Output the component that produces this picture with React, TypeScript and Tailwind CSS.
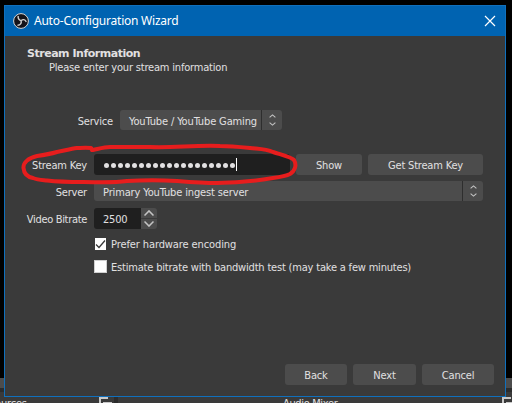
import React from 'react';

const body = "font-['DejaVu_Sans_Condensed','DejaVu_Sans',sans-serif]";

function Button({ className, label }: { className: string; label: string }) {
  return (
    <button className={`flex h-[21px] shrink-0 items-center justify-center rounded-[3px] bg-[#4c4c4c] pt-px ${className}`}>
      {label}
    </button>
  );
}

function UpDown() {
  return (
    <svg width="7" height="12" viewBox="0 0 7 12" fill="none" stroke="#c4c4c4" strokeWidth="1.1">
      <path d="M.6 3.4 3.5.9 6.4 3.4M.6 8.6 3.5 11.1 6.4 8.6" />
    </svg>
  );
}

function Combo({ className, text }: { className: string; text: React.ReactNode }) {
  return (
    <div className={`flex h-5 overflow-hidden rounded-[3px] bg-[#4c4c4c] pl-[9px] ${className}`}>
      <div className="flex min-w-0 flex-1 items-center whitespace-nowrap pt-[2px] tracking-[-0.14px]">{text}</div>
      <div className="flex w-[21px] shrink-0 items-center justify-center border-l border-[#2e2e2e]">
        <UpDown />
      </div>
    </div>
  );
}

export default function App() {
  return (
    <div className={`relative h-[403px] w-[512px] overflow-hidden bg-black text-[11px] leading-none tracking-[-0.19px] text-[#e1e0e1] ${body}`}>
      <div className="flex h-full flex-col justify-end">
        <div className="h-[10px] bg-[#4c4c4c]" />
        <div className="h-[4px] bg-[#2c2c2c]" />
        <div className="flex h-[11px] bg-[#3a3a3a]" />
      </div>
      <div className="absolute top-[398px] -left-[11px]">Sources</div>
      <div className="absolute top-[398px] left-[283px] tracking-[-0.35px]">Audio Mixer</div>
      <svg className="absolute top-[397px] left-[99px]" width="20" height="6">
        <path d="M0 0h9v2H2v4H0zM4 5h9v1H4z" fill="#c8c8c8" />
        <path d="M15 0h4v6h-4z" fill="#2c2c2c" />
      </svg>
      <svg className="absolute top-[397px] left-[502px]" width="10" height="6">
        <path d="M0 0h9v2H2v4H0zM4 5h6v1H4z" fill="#c8c8c8" />
      </svg>

      <div className="absolute top-[5px] left-[4px] flex h-[392px] w-[502px] flex-col border border-[#1070bd] bg-[#3a3a3a]">
        <header className="flex h-[30px] shrink-0 items-center bg-[#0063b1] pl-2">
          <svg className="-mt-px" width="16" height="16" viewBox="0 0 16 16">
            <circle cx="8" cy="8" r="7.4" fill="#141319" stroke="#d6d6d6" strokeWidth="1" />
            <g fill="none" stroke="#d0d0d0" strokeWidth="1.4">
              <path d="M5.200 2.900C4.700 5.700 6.100 7 8.100 7.700" />
              <path d="M13.300 8.800C11.900 6.200 9.800 6.100 8.100 7.700" />
              <path d="M4.500 12.200C7.400 12.300 8.700 10.200 8.100 7.700" />
            </g>
          </svg>
          <h1 className="ml-[5px] flex-1 whitespace-nowrap font-['Noto_Sans',sans-serif] text-[12px] tracking-[-0.23px] text-white">Auto-Configuration Wizard</h1>
          <svg className="mr-[9px]" width="12" height="12" viewBox="0 0 12 12">
            <path d="m1 1 10 10M11 1 1 11" stroke="#fff" strokeWidth="1.2" />
          </svg>
        </header>

        <main className="flex flex-1 flex-col pt-[12px]">
          <h2 className="h-[14px] pl-[22px] font-['DejaVu_Sans',sans-serif] text-[11px] font-bold tracking-[-0.48px]">Stream Information</h2>
          <p className="h-[13px] pl-[44px]">Please enter your stream information</p>

          <div className="mt-[35px] flex h-5 items-center">
            <div className="w-[115px] pt-[2px] pr-[7px] text-right">Service</div>
            <Combo className="w-[162px]" text="YouTube / YouTube Gaming" />
          </div>
          <div className="mt-6 flex h-[21px] items-center">
            <div className="w-[89px] pt-px pr-[7px] text-right whitespace-nowrap">Stream Key</div>
            <div className="flex h-[21px] w-[196px] items-center rounded-[3px] bg-[#1f1f1f] pl-[10px]">
              <span className="flex gap-[2px] pt-px">
                {Array.from({ length: 19 }, (_, i) => (
                  <i key={i} className="size-[5px] rounded-full bg-[#e1e0e1]" />
                ))}
              </span>
              <span className="ml-px h-[13px] w-px bg-white" />
            </div>
            <Button className="ml-[6px] w-[66px]" label="Show" />
            <Button className="ml-[6px] w-[115px]" label="Get Stream Key" />
          </div>
          <div className="mt-[6px] flex h-5 items-center">
            <div className="w-[89px] pt-[2px] pr-[7px] text-right">Server</div>
            <Combo className="w-[389px]" text="Primary YouTube ingest server" />
          </div>
          <div className="mt-[7px] flex h-[21px] items-center">
            <div className="w-[89px] pt-px pr-[7px] text-right whitespace-nowrap tracking-[-0.32px]">Video Bitrate</div>
            <div className="flex h-[21px] w-[47px] items-center rounded-l-[3px] bg-[#1f1f1f] pt-px pl-[9px]">2500</div>
            <div className="flex h-[21px] w-4 flex-col gap-px">
              <div className="flex h-[10px] items-center justify-center rounded-tr-[3px] bg-[#4c4c4c]">
                <svg width="10" height="6" viewBox="0 0 10 6"><path d="M.5 5.500 5 .9l4.500 4.600" fill="none" stroke="#c4c4c4" strokeWidth="1.5" /></svg>
              </div>
              <div className="flex h-[10px] items-center justify-center rounded-br-[3px] bg-[#4c4c4c]">
                <svg width="10" height="6" viewBox="0 0 10 6"><path d="M.5.5 5 5.100 9.500.5" fill="none" stroke="#c4c4c4" strokeWidth="1.5" /></svg>
              </div>
            </div>
          </div>
          <div className="mt-[8px] flex h-[14px] items-center pl-[90px]">
            <svg className="bg-white" width="11" height="12" viewBox="0 0 11 12"><path d="M1 6.500 4 9.500 10 2.500" fill="none" stroke="#3a3a3a" strokeWidth="1.3" /></svg>
            <span className="ml-[5px] whitespace-nowrap pt-px tracking-[-0.1px]">Prefer hardware encoding</span>
          </div>
          <div className="mt-[9px] flex h-[13px] items-center pl-[89px]">
            <span className="size-[13px] border border-[#d0d0d0] bg-white" />
            <span className="ml-1 whitespace-nowrap pt-px">Estimate bitrate with bandwidth test (may take a few minutes)</span>
          </div>
          <footer className="mt-auto mb-[11px] flex justify-end gap-[6px] pr-[11px]">
            <Button className="w-[62px]" label="Back" />
            <Button className="w-[63px]" label="Next" />
            <Button className="w-[72px]" label="Cancel" />
          </footer>
        </main>
      </div>

      <svg className="absolute top-[140px] left-[15px]" width="290" height="50" viewBox="15 140 290 50">
        <path d="M92 150L91 148C85 147.500 80 148 77 148C70 149 63 151 57 152C50 154 44 155 37 156C28 158 23 163 23.500 168C24 174 28 177 33 178C38 180 43 180 47 180.500C60 182 72 182 83 182C98 182 112 183 127 181C145 180 160 180 177 181C190 182 204 183 217 183C240 183 256 181 273 178C280 177 286 176 290 174C295 171 297 165 294 160C291 157 282 155 273 152C266 149 258 149 250 148C240 147 230 146 220 146C195 145 173 148 150 147H110C104 147 98 149 93 150" fill="none" stroke="#e71d1d" strokeWidth="4" strokeLinecap="round" strokeLinejoin="round" />
      </svg>
    </div>
  );
}
